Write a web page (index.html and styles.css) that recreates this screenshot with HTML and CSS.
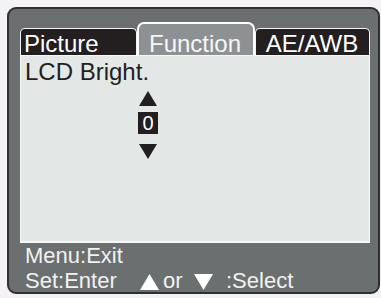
FILE: index.html
```html
<!DOCTYPE html>
<html>
<head>
<meta charset="utf-8">
<link rel="stylesheet" href="styles.css">
</head>
<body>
<div class="frame">
  <div class="tabs">
    <div class="tab tab-dark tab-picture">Picture</div>
    <div class="tab tab-active">Function</div>
    <div class="tab tab-dark tab-ae">AE/AWB</div>
  </div>
  <div class="panel">
    <div class="label">LCD Bright.</div>
    <div class="stepper">
      <svg class="tri" width="18" height="15" viewBox="0 0 18 15"><polygon points="9,0 18,15 0,15" fill="#231f20"/></svg>
      <div class="value">0</div>
      <svg class="tri" width="18" height="15" viewBox="0 0 18 15"><polygon points="0,0 18,0 9,15" fill="#231f20"/></svg>
    </div>
  </div>
  <div class="footer">
    <div class="line">Menu:Exit</div>
    <div class="line row">
      <span class="set">Set:Enter</span>
      <svg class="ftri up" width="19" height="16" viewBox="0 0 19 16"><polygon points="9.5,0 19,16 0,16" fill="#ffffff"/></svg>
      <span class="or">or</span>
      <svg class="ftri down" width="19" height="16" viewBox="0 0 19 16"><polygon points="0,0 19,0 9.5,16" fill="#ffffff"/></svg>
      <span class="sel">:Select</span>
    </div>
  </div>
</div>
</body>
</html>
```

FILE: styles.css
```css
html, body {
  margin: 0;
  padding: 0;
  background: #f4f2f4;
}
body {
  font-family: "Liberation Sans", Arial, sans-serif;
  width: 381px;
  height: 298px;
  overflow: hidden;
}
.frame {
  margin: 7px 0 0 7px;
  width: 373px;
  height: 287px;
  box-sizing: border-box;
  border: 2px solid #2f3131;
  border-radius: 9px;
  background: #6b6f6f;
  padding: 13px 0 0 11px;
}
.tabs {
  display: flex;
  align-items: flex-end;
  height: 33px;
}
.tab {
  box-sizing: border-box;
  font-size: 24px;
  color: #ffffff;
  line-height: 24px;
}
.tab-dark {
  height: 27px;
  background: #231f20;
  border: 1px solid #f4f4f4;
  border-bottom: none;
  border-radius: 5px 5px 0 0;
  padding-top: 3px;
}
.tab-picture {
  width: 117px;
  padding-left: 3px;
}
.tab-active {
  width: 118px;
  height: 33px;
  background: #8e9193;
  border: 2px solid #ffffff;
  border-bottom: none;
  border-radius: 7px 7px 0 0;
  text-align: center;
  padding-top: 8px;
  padding-right: 2px;
  color: #f6f6f6;
}
.tab-ae {
  width: 115px;
  text-align: center;
  padding-right: 1px;
}
.panel {
  box-sizing: border-box;
  width: 350px;
  height: 188px;
  background: #e3e8e7;
  border: 1px solid #f6f8f8;
  border-bottom-width: 2px;
  padding: 4px 0 0 4px;
  color: #231f20;
}
.label {
  font-size: 24px;
  line-height: 24px;
}
.stepper {
  display: flex;
  flex-direction: column;
  align-items: center;
  width: 20px;
  margin: 7px 0 0 113px;
}
.tri {
  display: block;
}
.value {
  margin: 6px 0 10px;
  width: 20px;
  height: 22px;
  background: #231f20;
  color: #ffffff;
  font-size: 20px;
  line-height: 22px;
  text-align: center;
}
.footer {
  padding: 0 0 0 5px;
  color: #f2f2f2;
  font-size: 22px;
  line-height: 25px;
}
.row {
  display: flex;
  align-items: center;
}
.set {
  width: 115px;
}
.ftri {
  display: block;
  margin-top: 2px;
}
.or {
  margin-left: 4px;
  width: 31px;
}
.sel {
  margin-left: 13px;
}
```
